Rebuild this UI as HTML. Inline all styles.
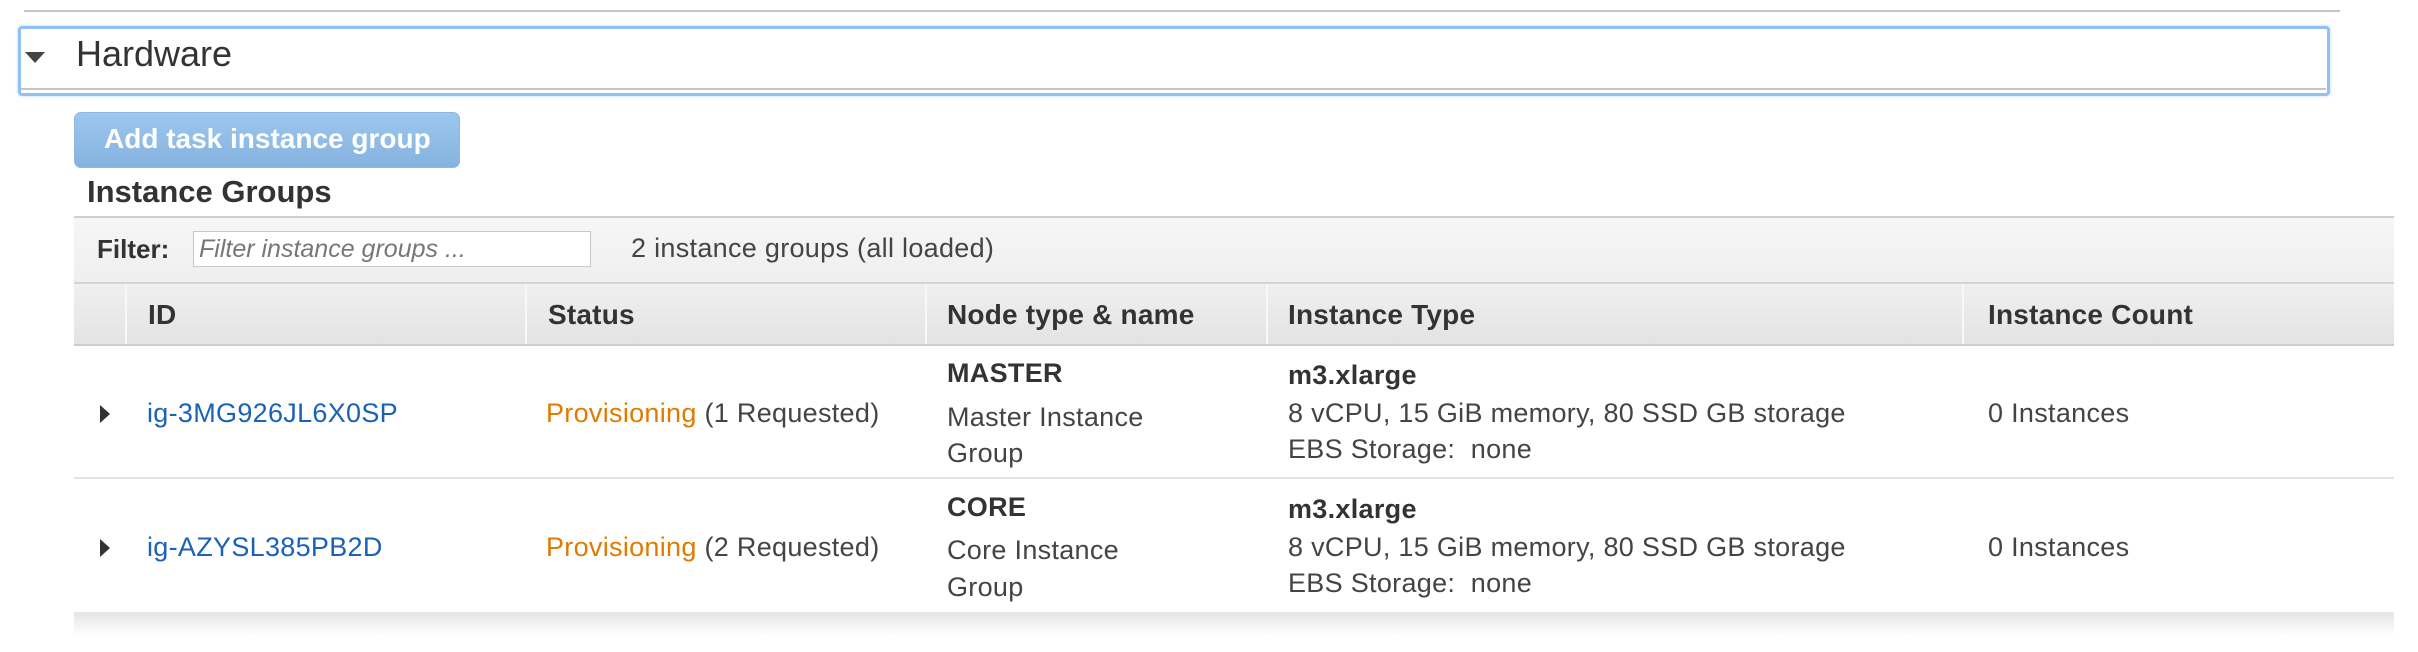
<!DOCTYPE html>
<html><head><meta charset="utf-8"><style>
*{margin:0;padding:0;box-sizing:border-box}
body{width:2418px;height:652px;background:#fff;font-family:"Liberation Sans",Arial,sans-serif;color:#444;position:relative;overflow:hidden}
.a{position:absolute;white-space:nowrap}
.cell{font-size:27px;letter-spacing:0.3px}
.h{font-size:28px;font-weight:bold;color:#333;line-height:30px;letter-spacing:0.2px}
</style></head><body>
<div class="a" style="left:24px;top:10px;width:2316px;height:2px;background:#c6c6c6"></div>
<div class="a" style="left:18px;top:26px;width:2312px;height:70px;border:3px solid #8fc1f3;border-radius:4px;box-shadow:0 0 3px #b8d8fa"></div>
<div class="a" style="left:21px;top:88px;width:2305px;height:2px;background:#c4c4c4"></div>
<div class="a" style="left:25px;top:52px;width:0;height:0;border-left:10px solid transparent;border-right:10px solid transparent;border-top:11px solid #444"></div>
<div class="a" style="left:76px;top:34px;font-size:36px;line-height:40px;color:#333">Hardware</div>

<div class="a" style="left:74px;top:112px;width:386px;height:56px;border-radius:7px;background:linear-gradient(#9cc7ef,#86b2df);border:1px solid #8db8e2"></div>
<div class="a" style="left:104px;top:123px;font-size:28px;font-weight:bold;color:#fff;line-height:32px">Add task instance group</div>
<div class="a" style="left:87px;top:175px;font-size:31px;font-weight:bold;color:#333;line-height:34px">Instance Groups</div>

<div class="a" style="left:74px;top:216px;width:2320px;height:2px;background:#cfcfcf"></div>
<div class="a" style="left:74px;top:218px;width:2320px;height:64px;background:linear-gradient(#f6f6f6,#efefef)"></div>
<div class="a" style="left:97px;top:234px;font-size:26px;font-weight:bold;color:#333;line-height:30px">Filter:</div>
<div class="a" style="left:193px;top:231px;width:398px;height:36px;background:#fff;border:1px solid #c8c8c8"></div>
<div class="a" style="left:199px;top:235px;font-size:25px;font-style:italic;color:#777;line-height:28px">Filter instance groups ...</div>
<div class="a cell" style="left:631px;top:233px;line-height:30px;color:#444">2 instance groups (all loaded)</div>

<div class="a" style="left:74px;top:282px;width:2320px;height:2px;background:#d4d4d4"></div>
<div class="a" style="left:74px;top:284px;width:2320px;height:60px;background:linear-gradient(#f0f0f0,#e3e3e3)"></div>
<div class="a" style="left:74px;top:344px;width:2320px;height:2px;background:#cdcdcd"></div>
<div class="a" style="left:125px;top:284px;width:2px;height:60px;background:#f8f8f8"></div>
<div class="a" style="left:525px;top:284px;width:2px;height:60px;background:#f8f8f8"></div>
<div class="a" style="left:925px;top:284px;width:2px;height:60px;background:#f8f8f8"></div>
<div class="a" style="left:1266px;top:284px;width:2px;height:60px;background:#f8f8f8"></div>
<div class="a" style="left:1962px;top:284px;width:2px;height:60px;background:#f8f8f8"></div>
<div class="a h" style="left:148px;top:300px">ID</div>
<div class="a h" style="left:548px;top:300px">Status</div>
<div class="a h" style="left:947px;top:300px">Node type &amp; name</div>
<div class="a h" style="left:1288px;top:300px">Instance Type</div>
<div class="a h" style="left:1988px;top:300px">Instance Count</div>

<!-- row 1 -->
<div class="a" style="left:100px;top:405px;width:0;height:0;border-top:9px solid transparent;border-bottom:9px solid transparent;border-left:10px solid #333"></div>
<div class="a cell" style="left:147px;top:398px;line-height:30px;color:#1a62b8">ig-3MG926JL6X0SP</div>
<div class="a cell" style="left:546px;top:398px;line-height:30px"><span style="color:#e17b00">Provisioning</span> (1 Requested)</div>
<div class="a cell" style="left:947px;top:358px;line-height:30px;font-weight:bold;color:#333">MASTER</div>
<div class="a cell" style="left:947px;top:402px;line-height:30px">Master Instance</div>
<div class="a cell" style="left:947px;top:438px;line-height:30px">Group</div>
<div class="a cell" style="left:1288px;top:360px;line-height:30px;font-weight:bold;color:#333">m3.xlarge</div>
<div class="a cell" style="left:1288px;top:398px;line-height:30px">8 vCPU, 15 GiB memory, 80 SSD GB storage</div>
<div class="a cell" style="left:1288px;top:434px;line-height:30px">EBS Storage:&nbsp;&nbsp;none</div>
<div class="a cell" style="left:1988px;top:398px;line-height:30px">0 Instances</div>
<div class="a" style="left:74px;top:477px;width:2320px;height:2px;background:#e2e2e2"></div>

<!-- row 2 -->
<div class="a" style="left:100px;top:539px;width:0;height:0;border-top:9px solid transparent;border-bottom:9px solid transparent;border-left:10px solid #333"></div>
<div class="a cell" style="left:147px;top:532px;line-height:30px;color:#1a62b8">ig-AZYSL385PB2D</div>
<div class="a cell" style="left:546px;top:532px;line-height:30px"><span style="color:#e17b00">Provisioning</span> (2 Requested)</div>
<div class="a cell" style="left:947px;top:492px;line-height:30px;font-weight:bold;color:#333">CORE</div>
<div class="a cell" style="left:947px;top:535px;line-height:30px">Core Instance</div>
<div class="a cell" style="left:947px;top:572px;line-height:30px">Group</div>
<div class="a cell" style="left:1288px;top:494px;line-height:30px;font-weight:bold;color:#333">m3.xlarge</div>
<div class="a cell" style="left:1288px;top:532px;line-height:30px">8 vCPU, 15 GiB memory, 80 SSD GB storage</div>
<div class="a cell" style="left:1288px;top:568px;line-height:30px">EBS Storage:&nbsp;&nbsp;none</div>
<div class="a cell" style="left:1988px;top:532px;line-height:30px">0 Instances</div>
<div class="a" style="left:74px;top:612px;width:2320px;height:24px;background:linear-gradient(#e4e4e4,#fff)"></div>
</body></html>
